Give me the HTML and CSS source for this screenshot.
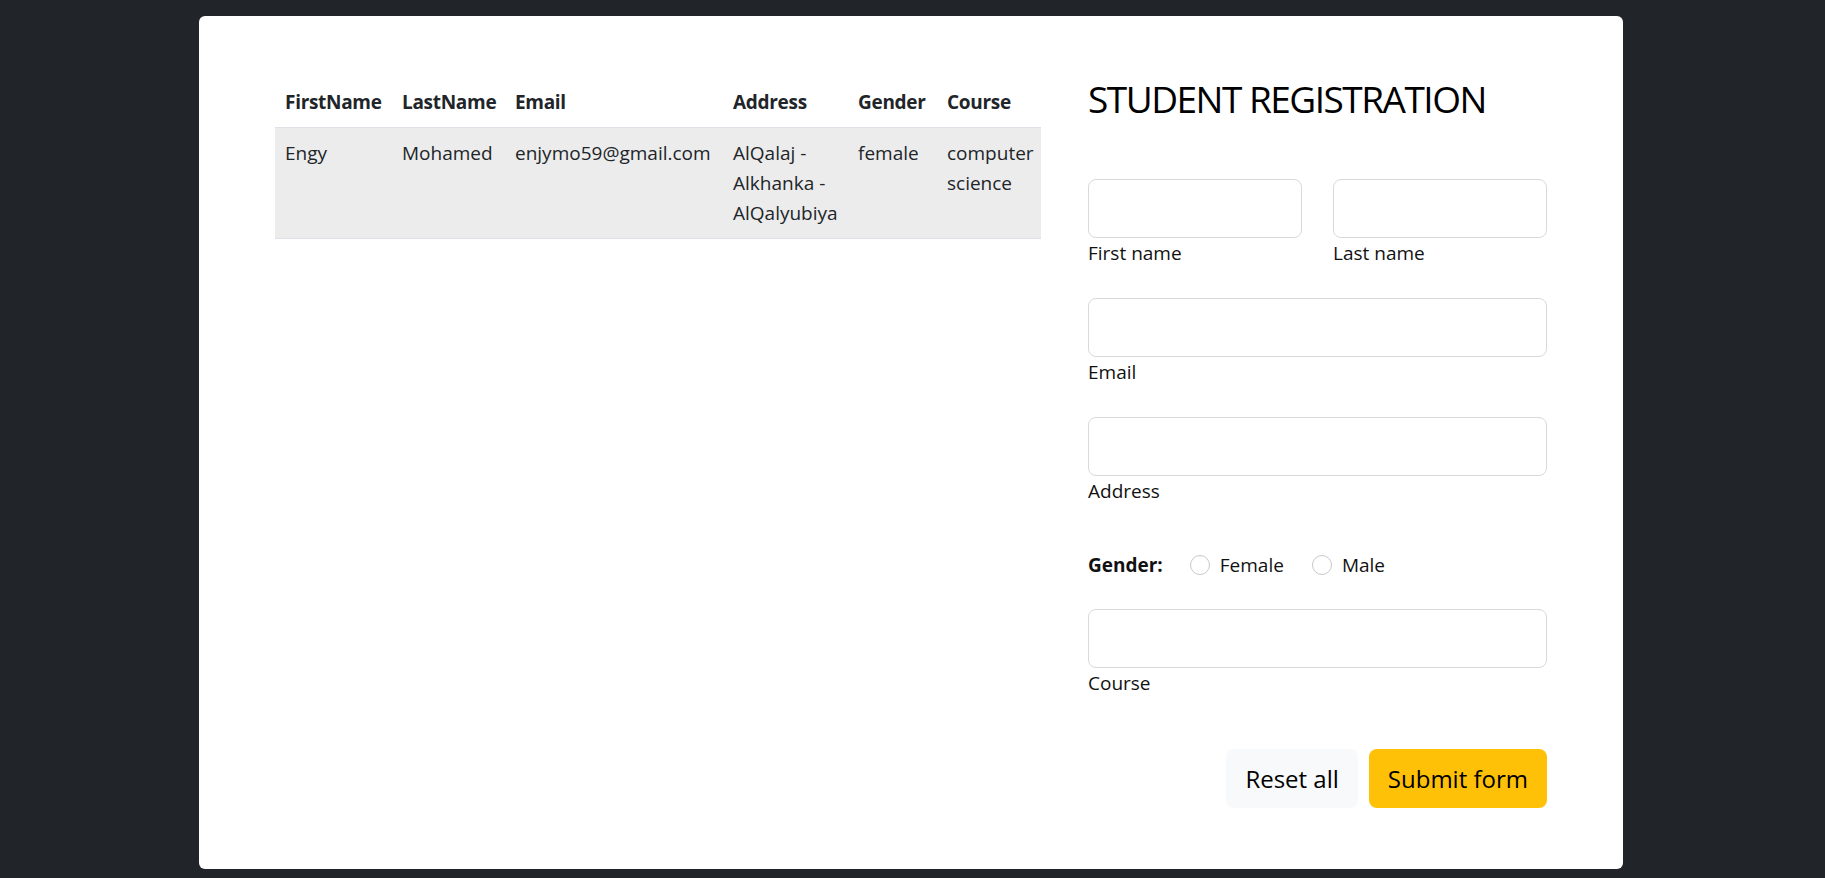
FILE: index.html
```html
<!DOCTYPE html>
<html lang="en">
<head>
<meta charset="utf-8">
<title>Student Registration</title>
<link rel="stylesheet" href="styles.css">
</head>
<body>
<main class="card">
  <section class="table-col">
    <table class="students">
      <colgroup>
        <col class="c-first"><col class="c-last"><col class="c-email"><col class="c-address"><col class="c-gender"><col class="c-course">
      </colgroup>
      <thead>
        <tr><th>FirstName</th><th>LastName</th><th>Email</th><th>Address</th><th>Gender</th><th>Course</th></tr>
      </thead>
      <tbody>
        <tr><td>Engy</td><td>Mohamed</td><td>enjymo59@gmail.com</td><td>AlQalaj - Alkhanka - AlQalyubiya</td><td>female</td><td>computer science</td></tr>
      </tbody>
    </table>
  </section>
  <section class="form-col">
    <h2 class="title">STUDENT REGISTRATION</h2>
    <form class="reg-form">
      <div class="pair">
        <div class="field">
          <input class="input" type="text" id="fn">
          <label class="label" for="fn">First name</label>
        </div>
        <div class="field">
          <input class="input" type="text" id="ln">
          <label class="label" for="ln">Last name</label>
        </div>
      </div>
      <div class="field">
        <input class="input" type="email" id="em">
        <label class="label" for="em">Email</label>
      </div>
      <div class="field">
        <input class="input" type="text" id="ad">
        <label class="label" for="ad">Address</label>
      </div>
      <div class="gender">
        <span class="gender-label">Gender:</span>
        <label class="radio"><input type="radio" name="g" class="radio-input"><span>Female</span></label>
        <label class="radio"><input type="radio" name="g" class="radio-input"><span>Male</span></label>
      </div>
      <div class="field">
        <input class="input" type="text" id="co">
        <label class="label" for="co">Course</label>
      </div>
      <div class="actions">
        <button type="reset" class="btn btn-light">Reset all</button>
        <button type="button" class="btn btn-warning">Submit form</button>
      </div>
    </form>
  </section>
</main>
</body>
</html>
```
FILE: styles.css
```css
* { box-sizing: border-box; }
html, body { margin: 0; padding: 0; }
body {
  background: #212529;
  font-family: "Open Sans", "Noto Sans", sans-serif;
  font-size: 19px;
  line-height: 30px;
  color: #212529;
}
.card {
  width: 1424px;
  margin: 16px 0 0 199px;
  background: #fff;
  border-radius: 6px;
  padding: 61px 76px;
  display: flex;
  align-items: flex-start;
  gap: 47px;
}
.table-col { width: 766px; flex: none; }
.students {
  width: 766px;
  border-collapse: collapse;
  table-layout: fixed;
}
.c-first { width: 117px; }
.c-last { width: 113px; }
.c-email { width: 218px; }
.c-address { width: 125px; }
.c-gender { width: 89px; }
.c-course { width: 104px; }
.students th, .students td {
  padding: 10px;
  text-align: left;
  vertical-align: top;
  border-bottom: 1px solid #dee2e6;
  color: #212529;
}
.students th { font-weight: 700; letter-spacing: -0.3px; }
.students tbody tr { background: #ececec; }

.form-col { width: 459px; flex: none; }
.title {
  margin: 0 0 59px;
  font-size: 37px;
  line-height: 43px;
  font-weight: 500;
  letter-spacing: -1.5px;
  white-space: nowrap;
  color: #000;
}
.reg-form { display: flex; flex-direction: column; }
.pair {
  display: grid;
  grid-template-columns: 1fr 1fr;
  column-gap: 31px;
  margin-bottom: 30px;
}
.pair .field { margin-bottom: 0; }
.field { display: flex; flex-direction: column; margin-bottom: 30px; }
.input {
  display: block;
  width: 100%;
  height: 59px;
  border: 1px solid #d9d9d9;
  border-radius: 8px;
  background: #fff;
  font: inherit;
  padding: 0 16px;
}
.label { color: #111; line-height: 30px; }
.gender {
  display: flex;
  align-items: center;
  margin: 14px 0 29px;
  height: 30px;
  color: #111;
}
.gender-label { font-weight: 700; margin-right: 27px; }
.radio { display: flex; align-items: center; margin-right: 28px; }
.radio-input {
  appearance: none;
  -webkit-appearance: none;
  width: 20px;
  height: 20px;
  margin: 0 10px 0 0;
  border: 1px solid #c8c8c8;
  border-radius: 50%;
  background: #fff;
}
.actions {
  display: flex;
  justify-content: flex-end;
  gap: 11px;
  margin-top: 21px;
}
.btn {
  height: 59px;
  padding: 0 19px;
  border: none;
  border-radius: 8px;
  font-family: inherit;
  font-size: 24px;
  color: #000;
}
.btn-light { background: #f8f9fa; }
.btn-warning { background: #ffc107; }
```
